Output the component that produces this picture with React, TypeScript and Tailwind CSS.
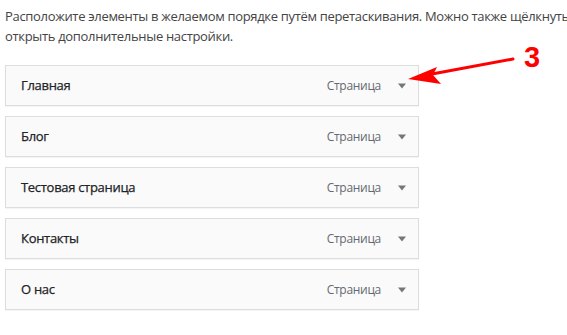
import React from 'react'

const items = [
  { id: '1', title: 'Главная', type: 'Страница' },
  { id: '2', title: 'Блог', type: 'Страница' },
  { id: '3', title: 'Тестовая страница', type: 'Страница' },
  { id: '4', title: 'Контакты', type: 'Страница' },
  { id: '5', title: 'О нас', type: 'Страница' },
]

function App() {
  return (
    <div className="relative w-[567px] h-[335px] overflow-hidden bg-white font-['Open_Sans',sans-serif]">
      <p className="pl-[5px] pt-[6px] text-[13px] leading-[20px] tracking-[-0.32px] text-[#444] whitespace-nowrap">
        Расположите элементы в желаемом порядке путём перетаскивания. Можно также щёлкнуть по любому элементу, чтобы
        <br />
        открыть дополнительные настройки.
      </p>
      <ul className="mt-[19px] ml-[5px] w-[414px] flex flex-col gap-[10px]">
        {items.map((item) => (
          <li
            key={item.id}
            className="h-[41px] flex items-center border border-[#dddddd] bg-[#fafafa] pl-[15px] pr-[12px] shadow-[0_1px_1px_rgba(0,0,0,0.04)]"
          >
            <span className="flex-1 text-[13px] tracking-[-0.3px] text-[#1d2327] [-webkit-text-stroke:0.25px_#1d2327]">
              {item.title}
            </span>
            <span className="text-[12px] tracking-[-0.3px] text-[#646970]">{item.type}</span>
            <svg width="8" height="6" viewBox="0 0 8 6" className="ml-[17px]">
              <path d="M0 0.5 L8 0.5 L4 5.5 Z" fill="#72777c" />
            </svg>
          </li>
        ))}
      </ul>
      <svg width="567" height="335" className="absolute left-0 top-0 pointer-events-none">
        <line x1="513" y1="59" x2="432" y2="74" stroke="#ff0000" strokeWidth="3" strokeLinecap="round" />
        <path d="M408 79 L437 67 L433 75 L441 84 Z" fill="#ff0000" />
      </svg>
      <span className="absolute left-[524px] top-[43px] text-[29px] font-bold leading-none text-[#ff0000] font-['Liberation_Sans',sans-serif]">
        3
      </span>
    </div>
  )
}

export default App
